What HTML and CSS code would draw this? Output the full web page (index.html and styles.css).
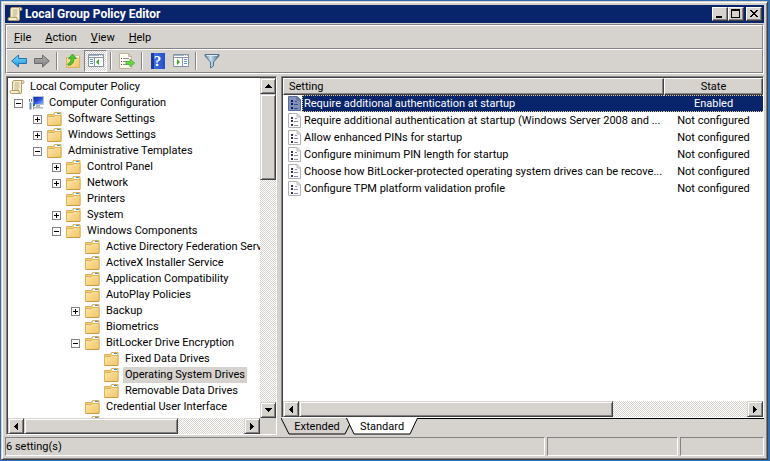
FILE: index.html
```html
<!DOCTYPE html>
<html lang="en">
<head>
    <meta charset="UTF-8">
    <meta name="viewport" content="width=device-width, initial-scale=1.0">
    <title>Local Group Policy Editor</title>
    <link rel="stylesheet" href="styles.css">
</head>
<body>
    <!-- Shared icons -->
    <svg class="icon-defs" aria-hidden="true">
        <defs>
            <linearGradient id="folderFill" x1="0" y1="0" x2="1" y2="1">
                <stop offset="0" stop-color="#ffe8a8"/>
                <stop offset="1" stop-color="#f0c468"/>
            </linearGradient>
            <linearGradient id="blueFill" x1="0" y1="0" x2="0" y2="1">
                <stop offset="0" stop-color="#7fdcff"/>
                <stop offset="1" stop-color="#1a8fd8"/>
            </linearGradient>
            <linearGradient id="grayFill" x1="0" y1="0" x2="0" y2="1">
                <stop offset="0" stop-color="#b4b4b4"/>
                <stop offset="1" stop-color="#7c7c7c"/>
            </linearGradient>
            <linearGradient id="funnelFill" x1="0" y1="0" x2="1" y2="0">
                <stop offset="0" stop-color="#5f87a8"/>
                <stop offset="0.4" stop-color="#cfe2f0"/>
                <stop offset="1" stop-color="#44698a"/>
            </linearGradient>
            <linearGradient id="screenFill" x1="0" y1="0" x2="1" y2="1">
                <stop offset="0" stop-color="#0a1fa0"/>
                <stop offset="0.5" stop-color="#2a50e0"/>
                <stop offset="1" stop-color="#9cc4ff"/>
            </linearGradient>
            <symbol id="folder" viewBox="0 0 16 16">
                <path d="M.5 3.500h6l1-2h6.500v12.500H.5z" fill="#f4cf7c" stroke="#dbb05a"/>
                <path d="M8 2h5v2H8z" fill="#fff"/>
                <path d="M10 2h3v1h-3z" fill="#3f92dc"/>
                <path d="M.5 5.500h6.500l1-1h6v10H.5z" fill="url(#folderFill)" stroke="#dcb25c"/>
                <path d="M1 14.500h13" stroke="#c99a48"/>
            </symbol>
            <symbol id="scroll" viewBox="0 0 16 16">
                <path d="M4.500 1.500h9q1.500 0 1.500 1.500t-1.500 1.500h-1v8.500q0 1.500-1.500 1.500H2.500q-1.500 0-1.500-1.500t1.500-1.500h1V3z" fill="#f8efcf" stroke="#b09a68"/>
                <path d="M12.500 4.500V3q0-1.500 1-1.500M3.500 11.500h6.500v1.500q0 1.500 1.200 1.500" fill="none" stroke="#b09a68"/>
                <path d="M5.500 4h5M5.500 6h5M5.500 8h5M5.500 10h4" stroke="#b9ad8c"/>
            </symbol>
            <symbol id="computer" viewBox="0 0 16 16">
                <path d="M5 1.500h10.500v8H5z" fill="url(#screenFill)" stroke="#b9c3cc"/>
                <path d="M8 10h4v2h3v1.500H6V12h2z" fill="#b4bbc0"/>
                <path d="M2.500 8v6.500" stroke="#6f8ea6" stroke-width="2"/>
                <path d="M1.500 4v2.500l1 1 1-1V4" fill="none" stroke="#5c7d96"/>
                <path d="M5.500 6v8.500" stroke="#93a3ad"/>
                <path d="M5 8h2v3H5z" fill="#2d6fb0"/>
            </symbol>
            <symbol id="setting" viewBox="0 0 13 15">
                <path d="M.5.5h8.500l3.500 3.500v10.500H.5z" fill="#fff" stroke="#b2b2b2"/>
                <path d="M9 .5V4h3.500z" fill="#eee" stroke="#bcbcbc"/>
                <path d="M3 4h2v2H3zM3 7h2v2H3zM3 11h2v2H3z" fill="#33334f"/>
                <path d="M7 5.500h2M6 8.500h4M6 12.500h4" stroke="#8d8db0"/>
            </symbol>
            <symbol id="setting-selected" viewBox="0 0 13 15">
                <path d="M.5.5h8.500l3.500 3.500v10.500H.5z" fill="#7f91bc" stroke="#5a6b9c"/>
                <path d="M9 .5V4h3.500z" fill="#7486b3" stroke="#5a6b9c"/>
                <path d="M3 4h2v2H3zM3 7h2v2H3zM3 11h2v2H3z" fill="#101c4e"/>
                <path d="M7 5.500h2M6 8.500h4M6 12.500h4" stroke="#3d4f8a"/>
            </symbol>
            <symbol id="arrow-left" viewBox="0 0 16 16">
                <path d="M.7 8l6.800-6v3.500h8v5h-8V14z" fill="url(#blueFill)" stroke="#2174b8"/>
            </symbol>
            <symbol id="arrow-right" viewBox="0 0 16 16">
                <path d="M15.300 8L8.500 2v3.500h-8v5h8V14z" fill="url(#grayFill)" stroke="#6a6a6a"/>
            </symbol>
            <symbol id="up-level" viewBox="0 0 16 16">
                <path d="M1.500 4.500h6l1-1.500h6v11.500h-13z" fill="url(#folderFill)" stroke="#dcb25c"/>
                <path d="M10 3h4v1.500h-4z" fill="#fff"/>
                <path d="M2.500 11q3.500-1 3.500-5.500H3.500L7.500 1l4 4.500H9q0 6-5.500 7z" fill="#4cc82c" stroke="#2d8f1c" stroke-width=".7"/>
            </symbol>
            <symbol id="panel-left" viewBox="0 0 16 14">
                <path d="M.5.5h15v12H.5z" fill="#fff" stroke="#8494a4"/>
                <path d="M1 1h14v1H1z" fill="#a3b6c8"/>
                <path d="M11 1.500h1M13 1.500h1" stroke="#fff"/>
                <path d="M1 3.500h14M6.500 4v8" stroke="#8494a4"/>
                <path d="M2 5.500h3M2 7.500h3M2 9.500h3" stroke="#5f96d0"/>
                <path d="M11 5v6L8 8z" fill="#38ab20"/>
            </symbol>
            <symbol id="panel-right" viewBox="0 0 16 14">
                <path d="M.5.5h15v12H.5z" fill="#fff" stroke="#8494a4"/>
                <path d="M1 1h14v1H1z" fill="#a3b6c8"/>
                <path d="M11 1.500h1M13 1.500h1" stroke="#fff"/>
                <path d="M1 3.500h14M9.500 4v8" stroke="#8494a4"/>
                <path d="M11 5.500h3M11 7.500h3M11 9.500h3" stroke="#5f96d0"/>
                <path d="M4 5v6l3-3z" fill="#38ab20"/>
            </symbol>
            <symbol id="export" viewBox="0 0 16 16">
                <path d="M.5.5h9l3 3v12H.5z" fill="#fffdf2" stroke="#c2b698"/>
                <path d="M9.500.5v3h3z" fill="#ece4cc" stroke="#c2b698"/>
                <path d="M2 5.500h1M2 8.500h1M2 11.500h1" stroke="#444"/>
                <path d="M4 5.500h6M4 8.500h4M4 11.500h4" stroke="#8a8a9a"/>
                <path d="M7 8.500h4V6l4.700 4-4.700 4v-2.500H7z" fill="#62d63c" stroke="#4cb032" stroke-width=".8"/>
            </symbol>
            <symbol id="filter" viewBox="0 0 16 16">
                <path d="M1 1.500h14v1.500L9.500 9v4l-3 2V9L1 3z" fill="url(#funnelFill)" stroke="#4f7392"/>
                <path d="M2.500 2.500h11" stroke="#dfeaf3"/>
            </symbol>
            <symbol id="tri-up" viewBox="0 0 7 4"><path d="M3 0h1v1h1v1h1v1h1v1H0V3h1V2h1V1h1z"/></symbol>
            <symbol id="tri-down" viewBox="0 0 7 4"><path d="M3 4h1V3h1V2h1V1h1V0H0v1h1v1h1v1h1z"/></symbol>
            <symbol id="tri-left" viewBox="0 0 4 7"><path d="M0 3v1h1v1h1v1h1v1h1V0H3v1H2v1H1v1z"/></symbol>
            <symbol id="tri-right" viewBox="0 0 4 7"><path d="M4 3v1H3v1H2v1H1v1H0V0h1v1h1v1h1v1z"/></symbol>
        </defs>
    </svg>

    <div class="window">
        <header class="title-bar">
            <svg class="icon"><use href="#scroll"/></svg>
            <h1>Local Group Policy Editor</h1>
            <div class="window-buttons">
                <button type="button" class="window-button" aria-label="Minimize">
                    <svg viewBox="0 0 12 10"><path d="M2 7h6v2H2z"/></svg>
                </button>
                <button type="button" class="window-button" aria-label="Maximize">
                    <svg viewBox="0 0 12 10"><path d="M1 0h9v9H1zM2 2v6h7V2z" fill-rule="evenodd"/></svg>
                </button>
                <button type="button" class="window-button close" aria-label="Close">
                    <svg viewBox="0 0 12 10"><path d="M2 1h2v1h1v1h2V2h1V1h2v1H9v1H8v1H7v1h1v1h1v1h1v1H8V7H7V6H5v1H4v1H2V7h1V6h1V5h1V4H4V3H3V2H2z"/></svg>
                </button>
            </div>
        </header>

        <div class="bars">
            <nav class="menu-bar">
                <button type="button"><u>F</u>ile</button>
                <button type="button"><u>A</u>ction</button>
                <button type="button"><u>V</u>iew</button>
                <button type="button"><u>H</u>elp</button>
            </nav>
            <div class="tool-bar">
                <button type="button" aria-label="Back"><svg class="icon"><use href="#arrow-left"/></svg></button>
                <button type="button" aria-label="Forward"><svg class="icon"><use href="#arrow-right"/></svg></button>
                <span class="separator"></span>
                <button type="button" aria-label="Up one level"><svg class="icon"><use href="#up-level"/></svg></button>
                <button type="button" class="pressed" aria-label="Show or hide console tree" aria-pressed="true"><svg class="icon panel"><use href="#panel-left"/></svg></button>
                <span class="separator"></span>
                <button type="button" aria-label="Export list"><svg class="icon"><use href="#export"/></svg></button>
                <span class="separator"></span>
                <button type="button" aria-label="Help"><span class="help-icon">?</span></button>
                <button type="button" aria-label="Show or hide action pane"><svg class="icon panel"><use href="#panel-right"/></svg></button>
                <span class="separator"></span>
                <button type="button" aria-label="Filter"><svg class="icon"><use href="#filter"/></svg></button>
            </div>
        </div>

        <main class="panes">
            <section class="tree-pane">
                <div class="tree-view">
                    <div class="tree-scroll">
                        <div class="node root"><svg class="icon"><use href="#scroll"/></svg><span class="label">Local Computer Policy</span></div>
                        <ul class="tree">
                            <li>
                                <div class="node"><button type="button" class="toggle open" aria-label="Collapse"></button><svg class="icon"><use href="#computer"/></svg><span class="label">Computer Configuration</span></div>
                                <ul>
                                    <li><div class="node"><button type="button" class="toggle" aria-label="Expand"></button><svg class="icon"><use href="#folder"/></svg><span class="label">Software Settings</span></div></li>
                                    <li><div class="node"><button type="button" class="toggle" aria-label="Expand"></button><svg class="icon"><use href="#folder"/></svg><span class="label">Windows Settings</span></div></li>
                                    <li>
                                        <div class="node"><button type="button" class="toggle open" aria-label="Collapse"></button><svg class="icon"><use href="#folder"/></svg><span class="label">Administrative Templates</span></div>
                                        <ul>
                                            <li><div class="node"><button type="button" class="toggle" aria-label="Expand"></button><svg class="icon"><use href="#folder"/></svg><span class="label">Control Panel</span></div></li>
                                            <li><div class="node"><button type="button" class="toggle" aria-label="Expand"></button><svg class="icon"><use href="#folder"/></svg><span class="label">Network</span></div></li>
                                            <li><div class="node leaf"><svg class="icon"><use href="#folder"/></svg><span class="label">Printers</span></div></li>
                                            <li><div class="node"><button type="button" class="toggle" aria-label="Expand"></button><svg class="icon"><use href="#folder"/></svg><span class="label">System</span></div></li>
                                            <li>
                                                <div class="node"><button type="button" class="toggle open" aria-label="Collapse"></button><svg class="icon"><use href="#folder"/></svg><span class="label">Windows Components</span></div>
                                                <ul>
                                                    <li><div class="node leaf"><svg class="icon"><use href="#folder"/></svg><span class="label">Active Directory Federation Services</span></div></li>
                                                    <li><div class="node leaf"><svg class="icon"><use href="#folder"/></svg><span class="label">ActiveX Installer Service</span></div></li>
                                                    <li><div class="node leaf"><svg class="icon"><use href="#folder"/></svg><span class="label">Application Compatibility</span></div></li>
                                                    <li><div class="node leaf"><svg class="icon"><use href="#folder"/></svg><span class="label">AutoPlay Policies</span></div></li>
                                                    <li><div class="node"><button type="button" class="toggle" aria-label="Expand"></button><svg class="icon"><use href="#folder"/></svg><span class="label">Backup</span></div></li>
                                                    <li><div class="node leaf"><svg class="icon"><use href="#folder"/></svg><span class="label">Biometrics</span></div></li>
                                                    <li>
                                                        <div class="node"><button type="button" class="toggle open" aria-label="Collapse"></button><svg class="icon"><use href="#folder"/></svg><span class="label">BitLocker Drive Encryption</span></div>
                                                        <ul>
                                                            <li><div class="node leaf"><svg class="icon"><use href="#folder"/></svg><span class="label">Fixed Data Drives</span></div></li>
                                                            <li><div class="node leaf"><svg class="icon"><use href="#folder"/></svg><span class="label selected">Operating System Drives</span></div></li>
                                                            <li><div class="node leaf"><svg class="icon"><use href="#folder"/></svg><span class="label">Removable Data Drives</span></div></li>
                                                        </ul>
                                                    </li>
                                                    <li><div class="node leaf"><svg class="icon"><use href="#folder"/></svg><span class="label">Credential User Interface</span></div></li>
                                                    <li><div class="node leaf"><svg class="icon"><use href="#folder"/></svg><span class="label">Desktop Gadgets</span></div></li>
                                                </ul>
                                            </li>
                                        </ul>
                                    </li>
                                </ul>
                            </li>
                        </ul>
                    </div>
                    <div class="scrollbar vertical">
                        <button type="button" class="raised" aria-label="Scroll up"><svg class="tri-v"><use href="#tri-up"/></svg></button>
                        <div class="track"><div class="thumb raised"></div></div>
                        <button type="button" class="raised" aria-label="Scroll down"><svg class="tri-v"><use href="#tri-down"/></svg></button>
                    </div>
                </div>
                <div class="scroll-row">
                    <div class="scrollbar">
                        <button type="button" class="raised" aria-label="Scroll left"><svg class="tri-h"><use href="#tri-left"/></svg></button>
                        <div class="track"><div class="thumb raised"></div></div>
                        <button type="button" class="raised" aria-label="Scroll right"><svg class="tri-h"><use href="#tri-right"/></svg></button>
                    </div>
                    <div class="corner"></div>
                </div>
            </section>

            <section class="result-pane">
                <div class="list-box">
                    <div class="list-scroll">
                        <table class="settings">
                            <thead>
                                <tr><th>Setting</th><th class="state">State</th></tr>
                            </thead>
                            <tbody>
                                <tr class="selected">
                                    <td><div class="cell"><svg class="doc"><use href="#setting-selected"/></svg><span class="name">Require additional authentication at startup</span></div></td>
                                    <td class="state">Enabled</td>
                                </tr>
                                <tr>
                                    <td><div class="cell"><svg class="doc"><use href="#setting"/></svg><span class="name">Require additional authentication at startup (Windows Server 2008 and ...</span></div></td>
                                    <td class="state">Not configured</td>
                                </tr>
                                <tr>
                                    <td><div class="cell"><svg class="doc"><use href="#setting"/></svg><span class="name">Allow enhanced PINs for startup</span></div></td>
                                    <td class="state">Not configured</td>
                                </tr>
                                <tr>
                                    <td><div class="cell"><svg class="doc"><use href="#setting"/></svg><span class="name">Configure minimum PIN length for startup</span></div></td>
                                    <td class="state">Not configured</td>
                                </tr>
                                <tr>
                                    <td><div class="cell"><svg class="doc"><use href="#setting"/></svg><span class="name">Choose how BitLocker-protected operating system drives can be recove...</span></div></td>
                                    <td class="state">Not configured</td>
                                </tr>
                                <tr>
                                    <td><div class="cell"><svg class="doc"><use href="#setting"/></svg><span class="name">Configure TPM platform validation profile</span></div></td>
                                    <td class="state">Not configured</td>
                                </tr>
                            </tbody>
                        </table>
                    </div>
                    <div class="scrollbar">
                        <button type="button" class="raised" aria-label="Scroll left"><svg class="tri-h"><use href="#tri-left"/></svg></button>
                        <div class="track"><div class="thumb raised"></div></div>
                        <button type="button" class="raised" aria-label="Scroll right"><svg class="tri-h"><use href="#tri-right"/></svg></button>
                    </div>
                </div>
                <div class="tabs">
                    <button type="button" class="tab">
                        <svg viewBox="0 0 72 17"><path d="M0 0l8 16h56l8-16" fill="#d6d3ce" stroke="#000"/></svg>
                        <span>Extended</span>
                    </button>
                    <button type="button" class="tab active">
                        <svg viewBox="0 0 72 17"><path d="M0-1l8 17h56l8-17" fill="#fff" stroke="#000"/></svg>
                        <span>Standard</span>
                    </button>
                </div>
            </section>
        </main>

        <footer class="status-bar">
            <div class="status-text">6 setting(s)</div>
            <div class="status-cell"></div>
            <div class="status-cell narrow"></div>
        </footer>
    </div>
</body>
</html>
```
FILE: styles.css
```css
:root {
    --face: #d6d3ce;
    --shadow: #848284;
    --dark: #424142;
    --navy: #08246b;
    --dither: repeating-conic-gradient(#ffffff 0 25%, #d6d3ce 0 50%) 0 0 / 2px 2px;
}

* {
    margin: 0;
    padding: 0;
    box-sizing: border-box;
}

body {
    height: 100vh;
    padding: 1px 2px 1px 1px;
    background: #2f6cb0;
    font-family: Tahoma, Roboto, "Liberation Sans", sans-serif;
    font-size: 11px;
    line-height: 16px;
    color: #000;
    overflow: hidden;
}

button {
    font: inherit;
    color: inherit;
    background: none;
    border: none;
}

ul {
    list-style: none;
}

svg {
    display: block;
    flex: none;
}

.icon-defs {
    position: absolute;
    width: 0;
    height: 0;
}

.icon {
    width: 16px;
    height: 16px;
}

.raised {
    background: var(--face);
    border: 1px solid;
    border-color: var(--face) var(--dark) var(--dark) var(--face);
    box-shadow: inset 1px 1px #fff, inset -1px -1px var(--shadow);
}

/* Window frame */
.window {
    display: flex;
    flex-direction: column;
    height: 100%;
    padding: 3px;
    background: var(--face);
    border: 1px solid;
    border-color: var(--face) var(--dark) var(--dark) var(--face);
    box-shadow: inset 1px 1px #fff, inset -1px -1px var(--shadow);
}

.title-bar {
    display: flex;
    align-items: center;
    gap: 2px;
    height: 18px;
    padding: 0 2px;
    background: var(--navy);
    color: #fff;
}

.title-bar h1 {
    flex: 1;
    font-size: 12px;
    font-weight: 700;
}

.window-buttons {
    display: flex;
}

.window-button {
    width: 16px;
    height: 14px;
    padding: 1px 2px 2px 1px;
    background: var(--face);
    border: 1px solid;
    border-color: #fff var(--dark) var(--dark) #fff;
    box-shadow: inset -1px -1px var(--shadow);
}

.window-button svg {
    width: 12px;
    height: 10px;
}

.window-button.close {
    margin-left: 2px;
}

/* Menu and tool bars */
.bars {
    margin-top: 1px;
    border: 1px solid;
    border-color: var(--shadow) #fff #fff var(--shadow);
}

.menu-bar,
.tool-bar {
    display: flex;
    align-items: center;
    height: 24px;
    border: 1px solid;
    border-color: #fff var(--shadow) var(--shadow) #fff;
}

.menu-bar button {
    padding: 2px 7px 0;
}

.tool-bar button {
    display: flex;
    align-items: center;
    justify-content: center;
    width: 23px;
    height: 22px;
}

.tool-bar .pressed {
    background: var(--dither);
    border: 1px solid;
    border-color: var(--shadow) #fff #fff var(--shadow);
}

.icon.panel {
    height: 14px;
}

.separator {
    width: 2px;
    height: 18px;
    margin: 0 3px;
    background: var(--shadow);
    border-right: 1px solid #fff;
}

.help-icon {
    width: 14px;
    height: 16px;
    background: linear-gradient(90deg, #1c3a9c 3px, #3f6fe0 3px, #2450c8);
    font-family: "Liberation Serif", serif;
    font-size: 15px;
    font-weight: 700;
    color: #fff;
}

/* Panes */
.panes {
    display: flex;
    flex: 1;
    gap: 4px;
    min-height: 0;
    margin-top: 2px;
}

.tree-pane,
.list-box {
    display: flex;
    flex-direction: column;
    background: #fff;
    border: 1px solid;
    border-color: var(--shadow) #fff #fff var(--shadow);
    box-shadow: inset 1px 1px var(--dark);
    padding: 1px 0 0 1px;
}

.tree-pane {
    width: 271px;
    margin-left: 1px;
}

.tree-view {
    display: flex;
    flex: 1;
    min-height: 0;
}

.tree-scroll {
    flex: 1;
    padding-top: 1px;
    overflow: hidden;
    white-space: nowrap;
}

.tree {
    padding-left: 6px;
}

.tree ul {
    padding-left: 19px;
}

.node {
    display: flex;
    align-items: center;
    gap: 3px;
    height: 16px;
}

.node.root {
    padding-left: 1px;
}

.node.leaf {
    padding-left: 14px;
}

.label {
    padding: 0 2px;
}

.label.selected {
    background: var(--face);
}

.toggle {
    width: 9px;
    height: 9px;
    margin-right: 2px;
    border: 1px solid var(--shadow);
    background:
        linear-gradient(#000, #000) center / 5px 1px no-repeat,
        linear-gradient(#000, #000) center / 1px 5px no-repeat;
}

.toggle.open {
    background: linear-gradient(#000, #000) center / 5px 1px no-repeat;
}

/* Scrollbars */
.scrollbar {
    display: flex;
    flex: 1;
    height: 16px;
}

.scrollbar button {
    display: flex;
    align-items: center;
    justify-content: center;
    flex: none;
    width: 16px;
    height: 16px;
}

.track {
    flex: 1;
    background: var(--dither);
}

.thumb {
    width: 70%;
    height: 16px;
}

.scrollbar.vertical {
    flex: none;
    flex-direction: column;
    width: 16px;
    height: auto;
}

.vertical .thumb {
    width: 16px;
    height: 28%;
}

.tri-v {
    width: 7px;
    height: 4px;
}

.tri-h {
    width: 4px;
    height: 7px;
}

.scroll-row {
    display: flex;
    flex: none;
}

.corner {
    width: 16px;
    height: 16px;
    background: var(--face);
}

/* Settings list */
.result-pane {
    display: flex;
    flex: 1;
    flex-direction: column;
    min-width: 0;
}

.list-box {
    flex: 1;
    min-height: 0;
}

.list-scroll {
    flex: 1;
    min-height: 0;
    overflow: hidden;
}

.list-box .scrollbar {
    flex: none;
}

.settings {
    width: 100%;
    table-layout: fixed;
    border-collapse: separate;
    border-spacing: 0;
}

.settings th {
    height: 17px;
    padding: 1px 5px 0;
    background: var(--face);
    border: 1px solid;
    border-color: #fff var(--dark) var(--dark) #fff;
    box-shadow: inset -1px -1px var(--shadow);
    font-weight: 400;
    line-height: 14px;
    text-align: left;
}

.settings .state {
    width: 99px;
    text-align: center;
}

.settings td {
    height: 17px;
    white-space: nowrap;
}

.settings td.state {
    padding-top: 1px;
}

.cell {
    display: flex;
    align-items: center;
    padding-left: 5px;
}

.doc {
    width: 13px;
    height: 15px;
}

.name {
    flex: 1;
    margin-left: 1px;
    padding: 1px 0 0 2px;
    line-height: 16px;
}

.selected .name,
.selected .state {
    background: var(--navy);
    border: 1px dotted #e0c890;
    border-width: 1px 0;
    color: #fff;
    line-height: 14px;
}

.selected .name {
    border-left-width: 1px;
    padding-left: 1px;
}

/* View tabs */
.tabs {
    display: flex;
    height: 17px;
    border-top: 1px solid #000;
}

.tab {
    position: relative;
    width: 72px;
    height: 16px;
}

.tab svg {
    position: absolute;
    top: -1px;
    left: 0;
    width: 72px;
    height: 17px;
}

.tab span {
    position: relative;
}

.tab.active {
    margin-left: -7px;
}

/* Status bar */
.status-bar {
    display: flex;
    gap: 2px;
    height: 21px;
    padding-top: 2px;
}

.status-text,
.status-cell {
    border: 1px solid;
    border-color: var(--shadow) #fff #fff var(--shadow);
}

.status-text {
    flex: 1;
    line-height: 17px;
}

.status-cell {
    width: 131px;
}

.status-cell.narrow {
    width: 84px;
}
```
